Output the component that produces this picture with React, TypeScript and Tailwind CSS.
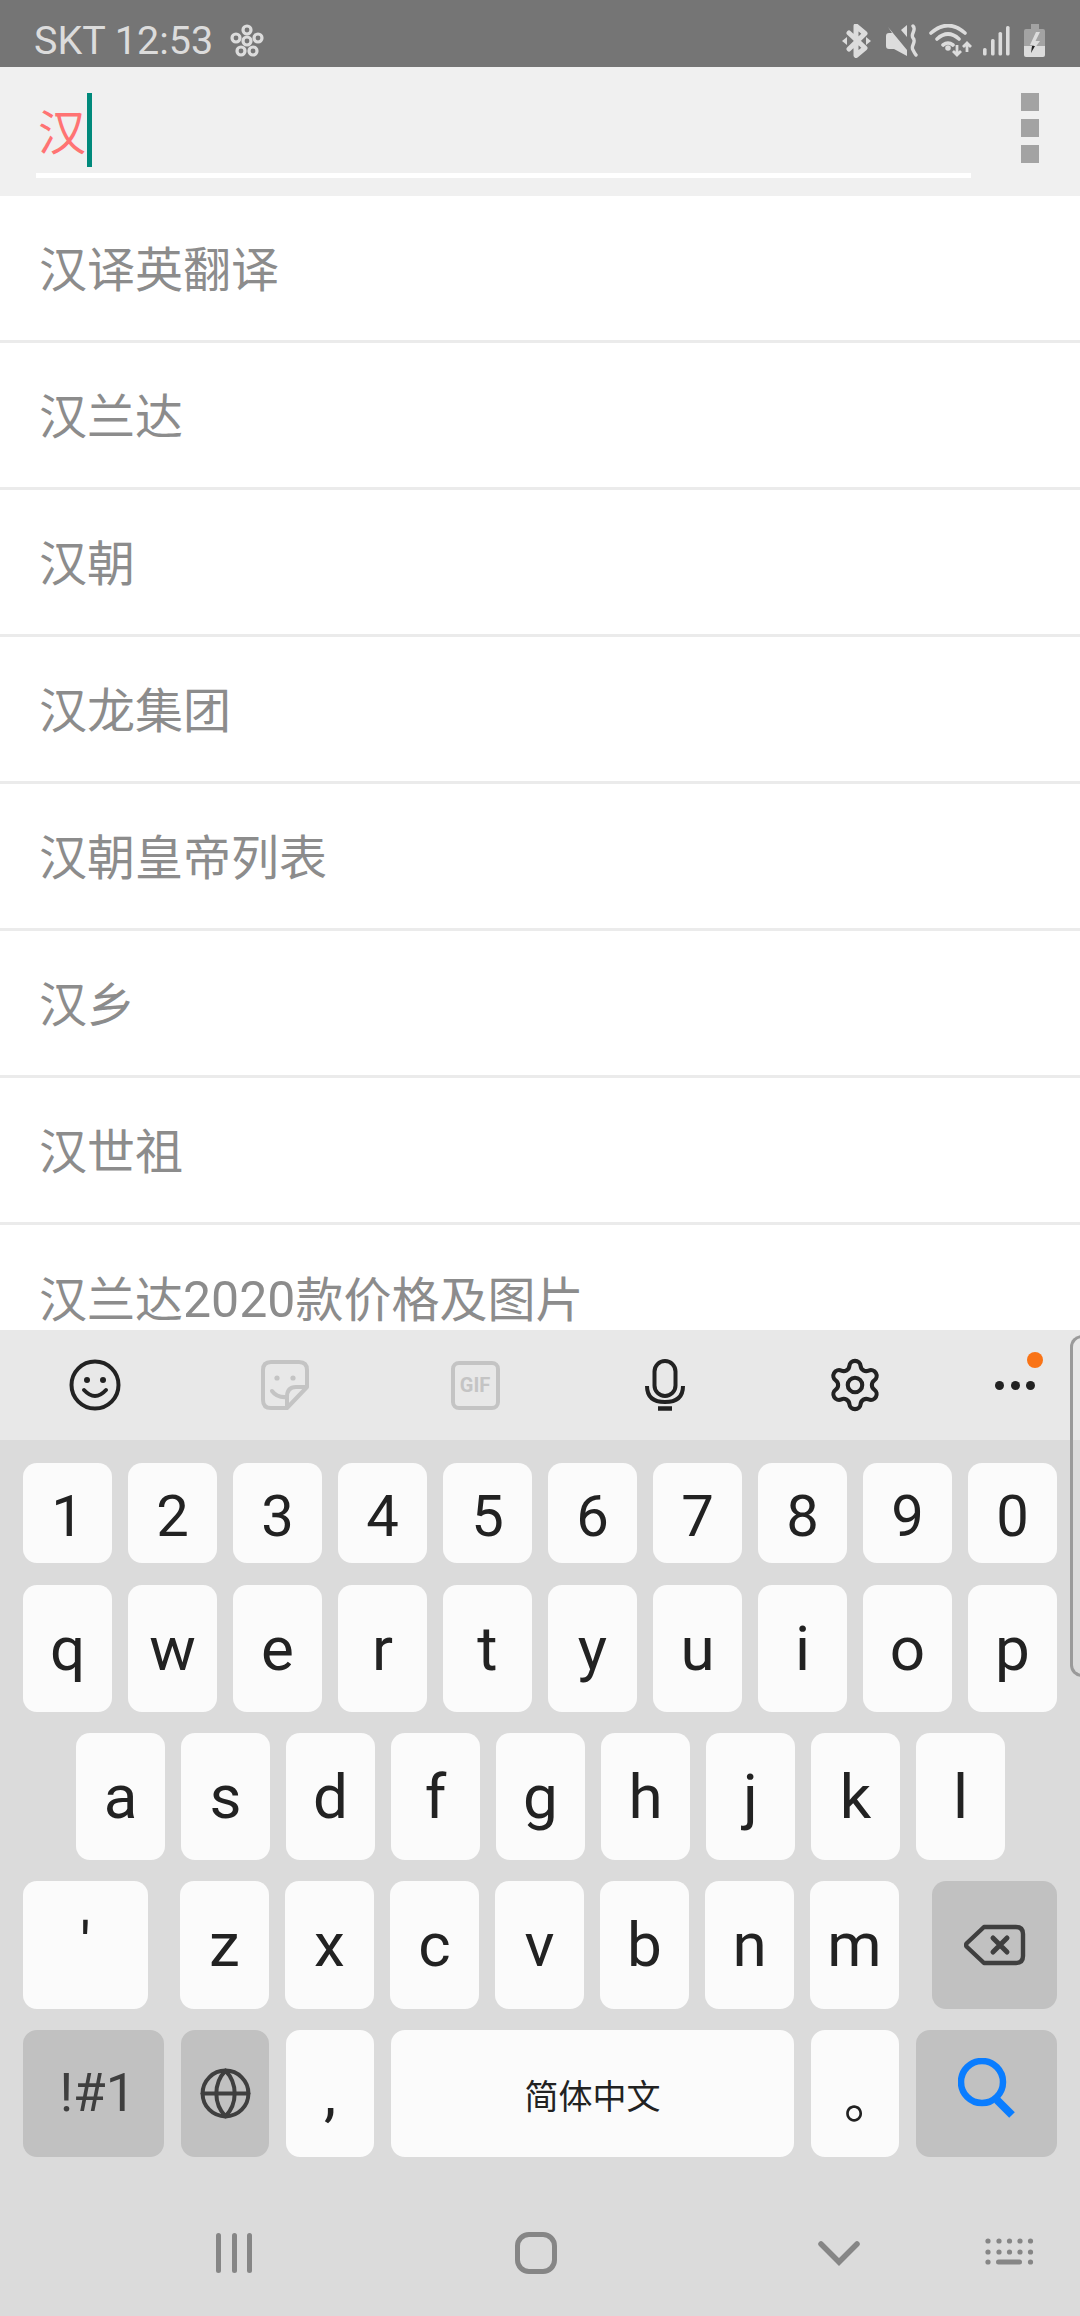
import React from "react";
import { Globe, Settings } from "lucide-react";

const suggestions: React.ReactNode[] = [
  "汉译英翻译",
  "汉兰达",
  "汉朝",
  "汉龙集团",
  "汉朝皇帝列表",
  "汉乡",
  "汉世祖",
  <>汉兰达<span className="text-[50px]">2020</span>款价格及图片</>,
];

function Key({ label, className = "", text = "text-[62px]" }: { label?: React.ReactNode; className?: string; text?: string }) {
  return (
    <div className={`flex items-center justify-center rounded-[14px] bg-[#fbfbfb] text-[#222222] leading-none ${text} ${className}`}>
      {label}
    </div>
  );
}

function StatusIcons() {
  const c = "#dcdcdc";
  return (
    <div className="flex items-center">
      <svg width="30" height="34" viewBox="843 24 30 34" fill="none">
        <path d="M850 33 L866 48 L857 55.5 V26 L866 33.5 L850 49" stroke={c} strokeWidth="5" strokeLinejoin="round" strokeLinecap="round" />
        <path d="M843 41 L848 37 V45 Z M872 41 L867 37 V45 Z" fill={c} />
      </svg>
      <svg className="ml-[14px]" width="32" height="34" viewBox="887 24 32 34" fill="none">
        <path d="M902 30 L908 25 V37 Z" fill={c} />
        <path d="M889 27 L908 50 V56 L895 49 H890 Q887 49 887 46 V36 Q887 33 890 33 H893 Z" fill={c} />
        <path d="M914 26 C918 30 911 34 914 38 C918 42 911 46 914 50 C915 52 916 54 917 55" stroke={c} strokeWidth="3.4" strokeLinecap="round" />
      </svg>
      <svg className="ml-[11px]" width="44" height="34" viewBox="930 24 44 34" fill="none">
        <path d="M932 33 Q949 18 966 33 M938 39 Q949 29 960 39 M944 45 Q949 41 954 45" stroke={c} strokeWidth="3.6" strokeLinecap="round" />
        <circle cx="949" cy="48" r="2.8" fill={c} />
        <path d="M958 45 V54 M954 51 L958 55 L962 51 M968 52 V44 M964 47 L968 43 L972 47" stroke={c} strokeWidth="2.8" />
      </svg>
      <svg className="ml-[10px]" width="28" height="32" viewBox="984 26 28 32" fill="none">
        <rect x="984" y="49" width="3.6" height="7.5" rx="1.6" fill={c} />
        <rect x="992" y="40" width="3.6" height="16.5" rx="1.6" fill={c} />
        <rect x="999.5" y="33" width="3.6" height="23.5" rx="1.6" fill={c} />
        <rect x="1007" y="27" width="3.6" height="29.5" rx="1.6" fill={c} />
      </svg>
      <svg className="ml-[13px]" width="22" height="34" viewBox="1025 24 22 34" fill="none">
        <path d="M1032 24 H1040 V29 H1044 Q1046 29 1046 31 V46 H1025 V31 Q1025 29 1027 29 H1032 Z" fill="#a3a3a3" />
        <path d="M1025 46 H1046 V55 Q1046 57 1044 57 H1027 Q1025 57 1025 55 Z" fill={c} />
        <path d="M1037 32 L1031 45 H1035 L1032 53 L1041 41 H1036.5 L1041 32 Z" fill={c} />
        <path d="M1036 46 L1032 53 L1033 46 Z" fill="#222222" />
      </svg>
    </div>
  );
}

function BackspaceIcon() {
  return (
    <svg width="62" height="42" viewBox="0 0 62 42" fill="none">
      <path d="M20 3 H52 Q59 3 59 10 V32 Q59 39 52 39 H20 L3 23 Q1 21 3 19 Z" stroke="#3f3f3f" strokeWidth="4.4" strokeLinejoin="round" />
      <path d="M29 14 L43 28 M43 14 L29 28" stroke="#3f3f3f" strokeWidth="5" strokeLinecap="round" />
    </svg>
  );
}

function SearchIcon() {
  return (
    <svg width="58" height="60" viewBox="0 0 58 60" fill="none">
      <circle cx="24" cy="24" r="21" stroke="#0a7dff" strokeWidth="6.5" />
      <path d="M39 42 L54 57" stroke="#0a7dff" strokeWidth="8" />
    </svg>
  );
}

export default function App() {
  return (
    <div className="relative flex h-[2316px] w-[1080px] flex-col overflow-hidden bg-white font-[Roboto,'Noto_Sans_CJK_SC',sans-serif]">
      {/* Status bar */}
      <div className="flex h-[67px] shrink-0 items-center justify-between bg-[#757575] pl-[34px] pr-[34px] pt-[15px]">
        <div className="flex items-center">
          <span className="text-[39.5px] leading-none text-[#dcdcdc]">SKT 12:53</span>
          <svg className="ml-[17px]" width="34" height="34" viewBox="0 0 34 34" fill="none" stroke="#dcdcdc" strokeWidth="3.2">
            <circle cx="17" cy="6" r="4" />
            <circle cx="6" cy="14" r="4" />
            <circle cx="28" cy="14" r="4" />
            <circle cx="11" cy="27" r="4" />
            <circle cx="23" cy="27" r="4" />
            <circle cx="17" cy="17" r="4" />
          </svg>
        </div>
        <StatusIcons />
      </div>

      {/* Search header */}
      <div className="flex h-[129px] shrink-0 items-start bg-[#f0f0f0] pl-[36px]">
        <div className="flex h-[111px] w-[935px] items-start border-b-[5px] border-white pl-[2px] pt-[26px]">
          <span className="mt-[17px] text-[48px] leading-none text-[#ff7373]">汉</span>
          <span className="ml-[1px] h-[74px] w-[5px] bg-[#00897b]" />
        </div>
        <div className="ml-[50px] mt-[26px] flex flex-col gap-[8px]">
          <span className="h-[18px] w-[18px] bg-[#a3a3a3]" />
          <span className="h-[18px] w-[18px] bg-[#a3a3a3]" />
          <span className="h-[18px] w-[18px] bg-[#a3a3a3]" />
        </div>
      </div>

      {/* Suggestions */}
      <div className="min-h-0 flex-1 overflow-hidden">
        {suggestions.map((s, i) => (
          <div key={i} className="flex h-[147px] items-center border-b-[3px] border-[#ebebeb] pl-[39px] pt-[6px] text-[48px] leading-none text-[#8c8c8c]">
            <span>{s}</span>
          </div>
        ))}
      </div>

      {/* Keyboard toolbar */}
      <div className="flex h-[110px] shrink-0 items-center bg-[#e8e8e8]">
        <div className="flex w-[190px] justify-center">
          <svg width="52" height="52" viewBox="0 0 52 52" fill="none">
            <circle cx="26" cy="26" r="23.5" stroke="#222222" strokeWidth="4" />
            <circle cx="18" cy="21" r="3" fill="#222222" />
            <circle cx="34" cy="21" r="3" fill="#222222" />
            <path d="M15 31 Q26 43 37 31" stroke="#222222" strokeWidth="4" strokeLinecap="round" />
          </svg>
        </div>
        <div className="flex w-[190px] justify-center">
          <svg width="50" height="52" viewBox="0 0 50 52" fill="none" stroke="#c4c4c4" strokeWidth="4">
            <path d="M27 49 H11 Q3 49 3 41 V11 Q3 3 11 3 H39 Q47 3 47 11 V28 Z" strokeLinejoin="round" />
            <path d="M47 28 H36 Q27 28 27 38 V49" strokeLinejoin="round" />
            <path d="M12 32 Q17 39 27 38" strokeLinecap="round" />
            <circle cx="17" cy="19" r="2.6" fill="#c4c4c4" stroke="none" />
            <circle cx="33" cy="19" r="2.6" fill="#c4c4c4" stroke="none" />
          </svg>
        </div>
        <div className="flex w-[190px] justify-center">
          <div className="flex h-[49px] w-[49px] items-center justify-center rounded-[8px] border-[4px] border-[#c4c4c4] text-[20px] font-bold leading-none text-[#c4c4c4]">
            GIF
          </div>
        </div>
        <div className="flex w-[190px] justify-center">
          <svg width="40" height="52" viewBox="0 0 40 52" fill="none" stroke="#222222" strokeWidth="4">
            <rect x="9.5" y="2" width="21" height="35" rx="10.5" />
            <path d="M2 27 Q2 43 20 43 Q38 43 38 27" />
            <path d="M13 49.5 H27" strokeWidth="4.5" />
          </svg>
        </div>
        <div className="flex w-[190px] justify-center">
          <Settings size={58} strokeWidth={1.7} color="#222222" />
        </div>
        <div className="flex w-[130px] justify-center">
          <div className="relative flex h-[9px] w-[40px] justify-between">
            <span className="h-[9px] w-[9px] rounded-full bg-[#222222]" />
            <span className="h-[9px] w-[9px] rounded-full bg-[#222222]" />
            <span className="h-[9px] w-[9px] rounded-full bg-[#222222]" />
            <span className="absolute left-[32px] top-[-29px] h-[16px] w-[16px] rounded-full bg-[#f97316]" />
          </div>
        </div>
      </div>

      {/* Keys */}
      <div className="flex h-[876px] shrink-0 flex-col bg-[#dbdbdb] px-[23px] pt-[23px]">
        <div className="flex h-[100px] gap-[16px]">
          {["1", "2", "3", "4", "5", "6", "7", "8", "9", "0"].map((k) => (
            <Key key={k} label={k} text="text-[58px] pt-[6px]" className="w-[89px]" />
          ))}
        </div>
        <div className="mt-[22px] flex h-[127px] gap-[16px]">
          {"qwertyuiop".split("").map((k) => (
            <Key key={k} label={k} className="w-[89px]" />
          ))}
        </div>
        <div className="mt-[21px] flex h-[127px] gap-[16px] pl-[53px]">
          {"asdfghjkl".split("").map((k) => (
            <Key key={k} label={k} className="w-[89px]" />
          ))}
        </div>
        <div className="mt-[21px] flex h-[128px] gap-[16px]">
          <Key label="'" className="mr-[16px] w-[125px]" />
          {"zxcvbnm".split("").map((k) => (
            <Key key={k} label={k} className="w-[89px]" />
          ))}
          <div className="ml-auto flex w-[125px] items-center justify-center rounded-[14px] bg-[#c1c1c1]">
            <BackspaceIcon />
          </div>
        </div>
        <div className="mt-[21px] flex h-[127px] gap-[17px]">
          <div className="flex w-[141px] items-center justify-center rounded-[14px] bg-[#c1c1c1] pl-[8px] text-[53px] leading-none text-[#3f3f3f]">!#1</div>
          <div className="flex w-[88px] items-center justify-center rounded-[14px] bg-[#c1c1c1]">
            <Globe size={55} strokeWidth={1.75} color="#3f3f3f" />
          </div>
          <Key label="," className="w-[88px]" />
          <Key label="简体中文" text="text-[34px] pt-[6px]" className="w-[403px]" />
          <Key label="。" text="text-[52px] pl-[30px] pt-[14px]" className="w-[88px]" />
          <div className="flex w-[141px] items-center justify-center rounded-[14px] bg-[#c1c1c1] pb-[12px]">
            <SearchIcon />
          </div>
        </div>

        {/* Navigation bar */}
        <div className="mt-[75px] flex h-[42px] items-center">
          <div className="ml-[193px] flex h-[40px] w-[36px] justify-between">
            <span className="w-[5px] rounded-full bg-[#868686]" />
            <span className="w-[5px] rounded-full bg-[#868686]" />
            <span className="w-[5px] rounded-full bg-[#868686]" />
          </div>
          <div className="ml-[263px] h-[42px] w-[42px] rounded-[14px] border-[5px] border-[#868686]" />
          <svg className="ml-[261px]" width="42" height="26" viewBox="0 0 42 26" fill="none">
            <path d="M3 4 L21 22 L39 4" stroke="#868686" strokeWidth="5.5" strokeLinecap="round" />
          </svg>
          <svg className="ml-[125px]" width="50" height="34" viewBox="0 0 50 34" fill="#868686">
            {[3, 14, 24.5, 35, 45.5].map((x) => (
              <React.Fragment key={x}>
                <circle cx={x} cy="5" r="2.6" />
                <circle cx={x} cy="16" r="2.6" />
              </React.Fragment>
            ))}
            <circle cx="3" cy="26" r="2.6" />
            <rect x="11" y="23.5" width="26" height="5" rx="2.5" />
            <circle cx="45.5" cy="26" r="2.6" />
          </svg>
        </div>
      </div>

      {/* Edge panel handle */}
      <div className="absolute left-[1070px] top-[1335px] h-[342px] w-[14px] rounded-l-[12px] border-[3px] border-[#9a9a9a]" />
    </div>
  );
}
